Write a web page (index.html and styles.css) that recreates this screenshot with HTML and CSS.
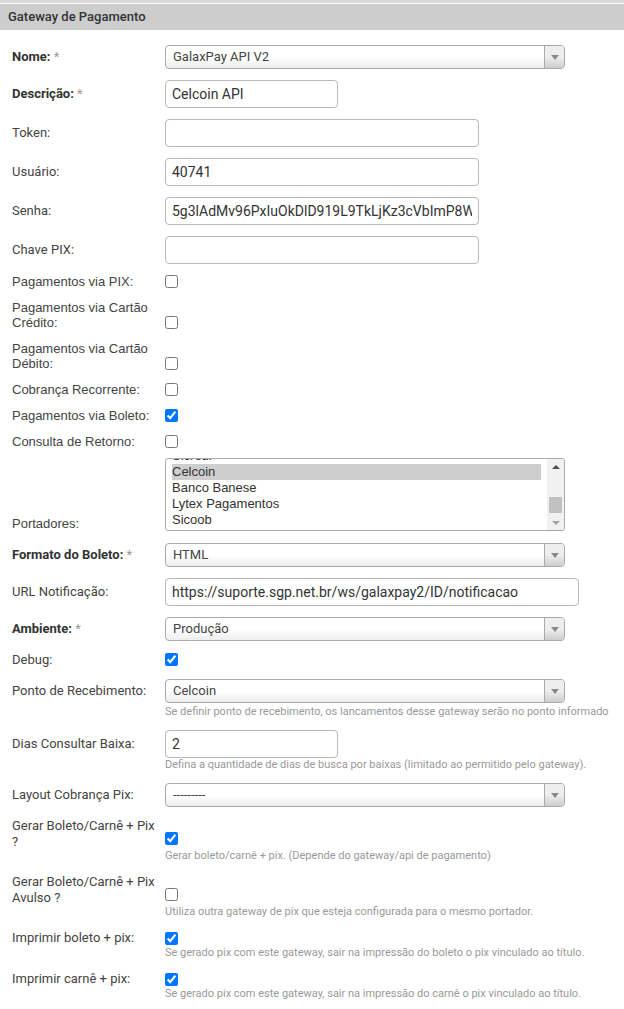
FILE: index.html
```html
<!DOCTYPE html>
<html lang="pt-BR">
<head>
  <meta charset="UTF-8">
  <meta name="viewport" content="width=device-width, initial-scale=1">
  <title>Gateway de Pagamento</title>
  <link rel="stylesheet" href="styles.css">
</head>
<body>
  <div class="topline"></div>
  <div class="panel-title">Gateway de Pagamento</div>

  <form class="form">
    <div class="row">
      <label class="lbl strong">Nome: <span class="star">*</span></label>
      <div class="select"><span class="select-text">GalaxPay API V2</span><span class="select-arrow"><b></b></span></div>
    </div>

    <div class="row">
      <label class="lbl strong">Descrição: <span class="star">*</span></label>
      <input class="input input-sm" type="text" value="Celcoin API">
    </div>

    <div class="row">
      <label class="lbl">Token:</label>
      <input class="input input-md" type="text" value="">
    </div>

    <div class="row">
      <label class="lbl">Usuário:</label>
      <input class="input input-md" type="text" value="40741">
    </div>

    <div class="row">
      <label class="lbl">Senha:</label>
      <input class="input input-md" type="text" value="5g3lAdMv96PxIuOkDlD919L9TkLjKz3cVbImP8Wq">
    </div>

    <div class="row">
      <label class="lbl">Chave PIX:</label>
      <input class="input input-md" type="text" value="">
    </div>

    <div class="row check first-check">
      <label class="lbl">Pagamentos via PIX:</label>
      <input class="cb" type="checkbox">
    </div>

    <div class="row check">
      <label class="lbl">Pagamentos via Cartão<br>Crédito:</label>
      <input class="cb" type="checkbox">
    </div>

    <div class="row check">
      <label class="lbl">Pagamentos via Cartão<br>Débito:</label>
      <input class="cb" type="checkbox">
    </div>

    <div class="row check">
      <label class="lbl">Cobrança Recorrente:</label>
      <input class="cb" type="checkbox">
    </div>

    <div class="row check">
      <label class="lbl">Pagamentos via Boleto:</label>
      <input class="cb" type="checkbox" checked>
    </div>

    <div class="row check">
      <label class="lbl">Consulta de Retorno:</label>
      <input class="cb" type="checkbox">
    </div>

    <div class="row check list-row">
      <label class="lbl">Portadores:</label>
      <div class="listbox">
        <div class="listbox-items">
          <div class="opt">Sicredi</div>
          <div class="opt selected">Celcoin</div>
          <div class="opt">Banco Banese</div>
          <div class="opt">Lytex Pagamentos</div>
          <div class="opt">Sicoob</div>
        </div>
        <div class="scrollbar">
          <div class="sb-btn"><i class="up"></i></div>
          <div class="sb-track"><div class="sb-thumb"></div></div>
          <div class="sb-btn"><i class="down"></i></div>
        </div>
      </div>
    </div>

    <div class="row after-list">
      <label class="lbl strong">Formato do Boleto: <span class="star">*</span></label>
      <div class="select"><span class="select-text">HTML</span><span class="select-arrow"><b></b></span></div>
    </div>

    <div class="row">
      <label class="lbl">URL Notificação:</label>
      <input class="input input-lg" type="text" value="https://suporte.sgp.net.br/ws/galaxpay2/ID/notificacao">
    </div>

    <div class="row">
      <label class="lbl strong">Ambiente: <span class="star">*</span></label>
      <div class="select"><span class="select-text">Produção</span><span class="select-arrow"><b></b></span></div>
    </div>

    <div class="row debug-row">
      <label class="lbl">Debug:</label>
      <input class="cb" type="checkbox" checked>
    </div>

    <div class="row after-debug">
      <label class="lbl">Ponto de Recebimento:</label>
      <div class="select"><span class="select-text">Celcoin</span><span class="select-arrow"><b></b></span></div>
      <p class="help help-select">Se definir ponto de recebimento, os lancamentos desse gateway serão no ponto informado</p>
    </div>

    <div class="row">
      <label class="lbl">Dias Consultar Baixa:</label>
      <input class="input input-sm" type="text" value="2">
      <p class="help">Defina a quantidade de dias de busca por baixas (limitado ao permitido pelo gateway).</p>
    </div>

    <div class="row">
      <label class="lbl">Layout Cobrança Pix:</label>
      <div class="select"><span class="select-text">---------</span><span class="select-arrow"><b></b></span></div>
    </div>

    <div class="row tall">
      <label class="lbl">Gerar Boleto/Carnê + Pix<br>?</label>
      <input class="cb" type="checkbox" checked>
      <p class="help">Gerar boleto/carnê + pix. (Depende do gateway/api de pagamento)</p>
    </div>

    <div class="row tall">
      <label class="lbl">Gerar Boleto/Carnê + Pix<br>Avulso ?</label>
      <input class="cb" type="checkbox">
      <p class="help">Utiliza outra gateway de pix que esteja configurada para o mesmo portador.</p>
    </div>

    <div class="row">
      <label class="lbl">Imprimir boleto + pix:</label>
      <input class="cb" type="checkbox" checked>
      <p class="help">Se gerado pix com este gateway, sair na impressão do boleto o pix vinculado ao título.</p>
    </div>

    <div class="row">
      <label class="lbl">Imprimir carnê + pix:</label>
      <input class="cb" type="checkbox" checked>
      <p class="help">Se gerado pix com este gateway, sair na impressão do carnê o pix vinculado ao título.</p>
    </div>
  </form>
</body>
</html>
```

FILE: styles.css
```css
* {
  box-sizing: border-box;
}

body {
  margin: 0;
  background: #fff;
  font-family: Roboto, "Liberation Sans", Arial, sans-serif;
  color: #333;
}

.topline {
  height: 3px;
  background: #dadada;
  margin-bottom: 1px;
}

.panel-title {
  height: 26px;
  line-height: 26px;
  padding-left: 8px;
  background: #cdcdcd;
  font-size: 13px;
  font-weight: 500;
  color: #333;
}

.form {
  display: flex;
  flex-direction: column;
  gap: 11px;
  padding: 15px 0 0 12px;
  margin: 0;
}

.row {
  display: grid;
  grid-template-columns: 153px auto;
  justify-content: start;
  align-items: center;
}

.lbl {
  font-size: 13px;
  line-height: 16px;
  color: #444;
}

.lbl.strong {
  font-weight: 700;
  color: #333;
}

.star {
  font-weight: 400;
  color: #999;
}

/* selects (select2 classic look) */
.select {
  display: flex;
  width: 400px;
  height: 24px;
  border: 1px solid #aaa;
  border-radius: 4px;
  background: linear-gradient(to bottom, #fff 50%, #eee 100%);
  overflow: hidden;
}

.select-text {
  flex: 1;
  padding-left: 7px;
  line-height: 22px;
  font-size: 13px;
  color: #444;
}

.select-arrow {
  width: 20px;
  display: flex;
  align-items: center;
  justify-content: center;
  border-left: 1px solid #aaa;
  background: linear-gradient(to bottom, #eee 50%, #ccc 100%);
}

.select-arrow b {
  width: 0;
  height: 0;
  border-style: solid;
  border-width: 5px 4px 0 4px;
  border-color: #888 transparent transparent transparent;
}

/* text inputs */
.input {
  height: 28px;
  border: 1px solid #b8b8b8;
  border-radius: 4px;
  padding: 0 6px;
  font-family: Roboto, "Liberation Sans", Arial, sans-serif;
  font-size: 14px;
  color: #333;
  background: #fff;
  outline: none;
}

.input-sm {
  width: 173px;
}

.input-md {
  width: 314px;
}

.input-lg {
  width: 414px;
}

/* checkboxes */
.cb {
  display: block;
  width: 13px;
  height: 13px;
  margin: 0;
}

.row.check {
  align-items: end;
}

.row.check .lbl {
  font-family: "Liberation Sans", Arial, sans-serif;
  line-height: 15px;
}

.row.check .cb {
  margin-bottom: 1px;
}

.first-check {
  margin-top: -1px;
}

.debug-row .lbl {
  line-height: 15px;
}

.after-debug {
  margin-top: 1px;
}

/* listbox */
.list-row {
  margin-top: -2px;
}

.listbox {
  display: flex;
  width: 400px;
  height: 73px;
  border: 1px solid #aaa;
  border-radius: 3px;
  overflow: hidden;
  background: #fff;
}

.listbox-items {
  flex: 1;
  padding: 0 6px;
  margin-top: -11px;
  font-family: "Liberation Sans", Arial, sans-serif;
  font-size: 13px;
  color: #333;
}

.opt {
  height: 16px;
  line-height: 16px;
}

.opt.selected {
  background: #cecece;
}

.scrollbar {
  width: 17px;
  display: flex;
  flex-direction: column;
  background: #f1f1f1;
}

.sb-btn {
  height: 15px;
  display: flex;
  align-items: center;
  justify-content: center;
}

.sb-btn i {
  width: 0;
  height: 0;
  border-style: solid;
}

.sb-btn .up {
  border-width: 0 4px 4px 4px;
  border-color: transparent transparent #505050 transparent;
}

.sb-btn .down {
  border-width: 4px 4px 0 4px;
  border-color: #a3a3a3 transparent transparent transparent;
}

.sb-track {
  flex: 1;
  padding: 23px 2px 0;
}

.sb-thumb {
  height: 16px;
  background: #c1c1c1;
}

.after-list {
  margin-top: 1px;
}

/* help text */
.help {
  grid-column: 2;
  margin: 0;
  font-size: 11px;
  line-height: 14px;
  color: #999;
  white-space: nowrap;
}

.help-select {
  margin-top: 2px;
}

.row.tall .cb {
  align-self: end;
  margin-bottom: 5px;
}

.row.tall .help {
  margin-top: -1px;
}
```
